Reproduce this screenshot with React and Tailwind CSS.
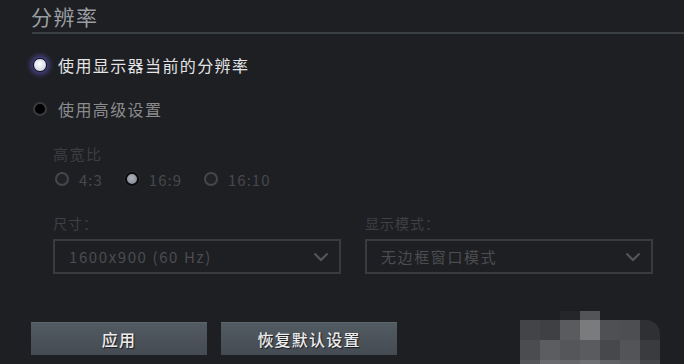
import React from 'react';

const font = { fontFamily: '"Noto Sans CJK SC", "Noto Sans", sans-serif' };

// mosaic watermark in the lower right corner, 20px cells
const mosaic = [
    { x: 560, y: 311, w: 20, h: 9, c: '#25262a' },
    { x: 580, y: 311, w: 20, h: 9, c: '#535457' },
    { x: 520, y: 320, c: '#434448' },
    { x: 540, y: 320, c: '#3f4043' },
    { x: 560, y: 320, c: '#5a5b5e' },
    { x: 580, y: 320, c: '#7a7b7d' },
    { x: 600, y: 320, c: '#4f5053' },
    { x: 620, y: 320, c: '#4d4e51' },
    { x: 640, y: 320, c: '#2f3033', round: true },
    { x: 520, y: 340, c: '#4b4c50' },
    { x: 540, y: 340, c: '#5c5d61' },
    { x: 560, y: 340, c: '#55565a' },
    { x: 580, y: 340, c: '#5a5b5e' },
    { x: 600, y: 340, c: '#47484c' },
    { x: 620, y: 340, c: '#535458' },
    { x: 640, y: 340, c: '#3a3b3e' },
    { x: 520, y: 360, c: '#55565a' },
    { x: 540, y: 360, c: '#6a6b6e' },
    { x: 560, y: 360, c: '#66676a' },
    { x: 580, y: 360, c: '#6e6f72' },
    { x: 600, y: 360, c: '#606164' },
    { x: 620, y: 360, c: '#5a5b5e' },
    { x: 640, y: 360, c: '#444548' },
];

const Chevron = () => (
    <svg width="16" height="10" viewBox="0 0 16 10" className="shrink-0">
        <path d="M1.5 1.5 L8 8 L14.5 1.5" fill="none" stroke="#55575b" strokeWidth="2" />
    </svg>
);

const Select = ({ label, value }) => (
    <div className="flex flex-col">
        <div className="text-[14px] leading-[18px] tracking-[1px] text-[#3e4044] h-[18px]">{label}</div>
        <div className="mt-[7px] w-[288px] h-[35px] border-2 border-[#393b3f] flex items-center justify-between pl-[14px] pr-[10px]">
            <span className="text-[15px] tracking-[1.6px] text-[#4b4d51] leading-none">{value}</span>
            <Chevron />
        </div>
    </div>
);

const SmallRadio = ({ checked, label }) => (
    <div className="flex items-center gap-[10px]">
        {checked ? (
            <span className="w-[14px] h-[14px] rounded-full border-2 border-[#0b0b0d] bg-[radial-gradient(circle_at_45%_40%,#aeb2bc,#7a7e88)] shadow-[0_0_0_1px_#2a2b2f]" />
        ) : (
            <span className="w-[14px] h-[14px] rounded-full border-2 border-[#45474b] bg-[#202226]" />
        )}
        <span className="text-[15px] tracking-[1px] text-[#46484c] leading-none">{label}</span>
    </div>
);

const App = () => {
    return (
        <div className="relative w-[684px] h-[364px] overflow-hidden bg-[#1e1f23]" style={font}>
            <div className="pl-[31px] pt-[2px] text-[21px] leading-[28px] tracking-[1.5px] text-[#9a9ea2]">分辨率</div>
            <div className="ml-[32px] mt-[2px] h-[2px] bg-[#3a3f44]" />

            <div className="ml-[33px] mt-[23px] flex flex-col gap-[28px]">
                <div className="flex items-center gap-[11px] h-[16px]">
                    <span className="w-[14px] h-[14px] rounded-full border-[1.5px] border-[#15152a] bg-[radial-gradient(circle_at_45%_40%,#ffffff,#c4c6dc)] shadow-[0_0_5px_3px_rgba(105,95,210,0.55)]" />
                    <span className="text-[16px] tracking-[1.4px] text-[#e4e4e6] leading-none">使用显示器当前的分辨率</span>
                </div>
                <div className="flex items-center gap-[11px] h-[16px]">
                    <span className="w-[14px] h-[14px] rounded-full border-2 border-[#3a3a3c] bg-black" />
                    <span className="text-[16px] tracking-[1.4px] text-[#8a8b8d] leading-none">使用高级设置</span>
                </div>
            </div>

            <div className="ml-[53px] mt-[28px]">
                <div className="text-[15px] leading-[18px] tracking-[1.5px] text-[#3c3e42]">高宽比</div>
                <div className="mt-[8px] ml-[2px] flex items-center gap-[22px] h-[16px]">
                    <SmallRadio label="4:3" />
                    <SmallRadio checked label="16:9" />
                    <SmallRadio label="16:10" />
                </div>
            </div>

            <div className="ml-[53px] mt-[27px] flex gap-[24px]">
                <Select label="尺寸：" value="1600x900 (60 Hz)" />
                <Select label="显示模式：" value="无边框窗口模式" />
            </div>

            <div className="ml-[31px] mt-[48px] flex gap-[14px]">
                {['应用', '恢复默认设置'].map((t) => (
                    <button
                        key={t}
                        className="w-[176px] h-[33px] bg-[linear-gradient(#525a62,#444b52)] border-t border-[#5e666e] text-[16px] tracking-[1.2px] text-[#ececec] font-medium [text-shadow:1px_1px_1px_#1a1c20]"
                    >
                        {t}
                    </button>
                ))}
            </div>

            {mosaic.map((m, i) => (
                <div
                    key={i}
                    className={'absolute' + (m.round ? ' rounded-tr-[14px]' : '')}
                    style={{ left: m.x, top: m.y, width: m.w || 20, height: m.h || 20, background: m.c }}
                />
            ))}
        </div>
    );
};

export default App;
